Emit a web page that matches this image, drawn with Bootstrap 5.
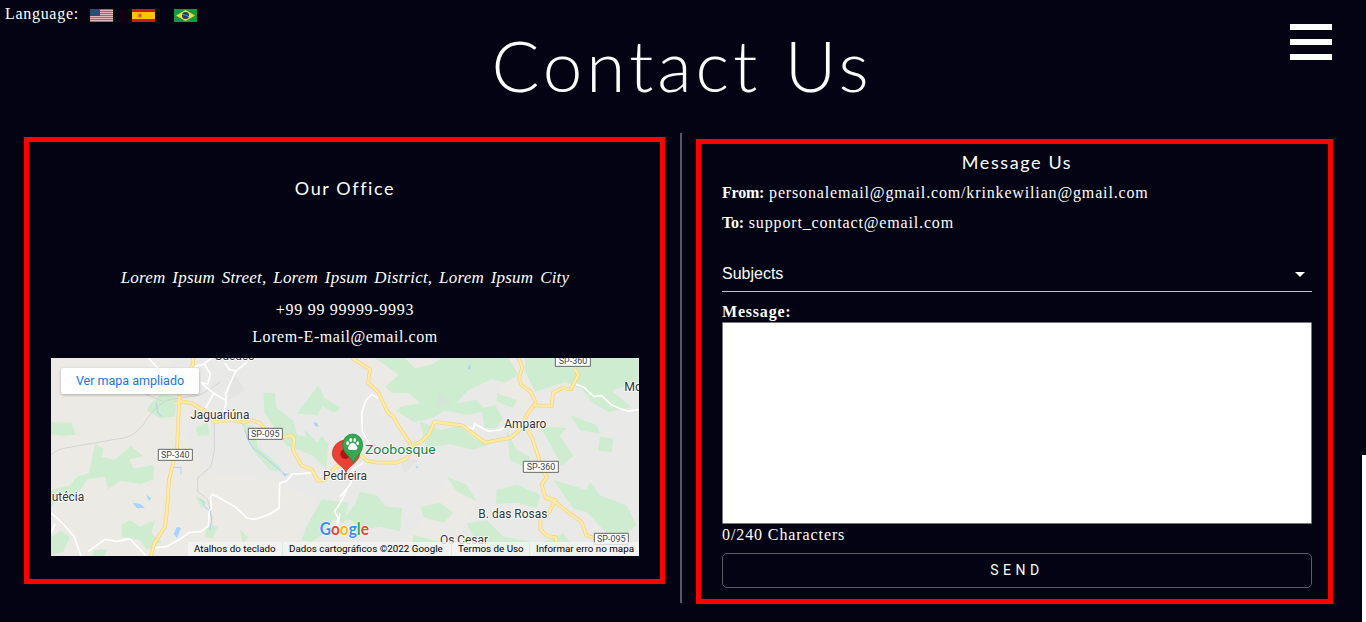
<!DOCTYPE html>
<html lang="en">
<head>
<meta charset="utf-8">
<meta name="viewport" content="width=device-width, initial-scale=1">
<title>Contact Us</title>
<link href="https://cdn.jsdelivr.net/npm/bootstrap@5.3.0/dist/css/bootstrap.min.css" rel="stylesheet">
<style>
html,body{height:100%;overflow:hidden}
body{background:#040314;color:#fbfffb;font-family:"Liberation Serif",serif;font-size:16px;letter-spacing:.8px}
.page-top{height:133px}
.lang-bar{height:27px;padding-left:5px}
.lang-text{width:85px;white-space:nowrap;letter-spacing:.7px}
.page-title{font:300 71px/76px Lato,sans-serif;letter-spacing:4px;margin:0 0 0 -2px}
.menu-btn{position:absolute;right:34px;top:24px;width:42px;border:0;padding:0;background:none}
.menu-btn span{display:block;height:6px;background:#fbfffb}
.panels{padding:0 33px 0 24px}
.frame{border:5px solid red}
.office{width:641px;height:447px;margin-top:4px;padding:0 21px 0 22px}
.divider{width:2px;height:470px;margin:0 14px 0 15px;background:#5a5963}
.message{width:637px;height:465px;margin-top:6px;padding:0 16px 0 21px}
.panel-title{font:400 18px/24px Lato,sans-serif;letter-spacing:1.6px;margin:0}
.office .panel-title{margin-top:34px}
.address{font-style:italic;font-size:17px;line-height:24px;letter-spacing:.2px;word-spacing:2.4px;margin:66px 0 0;white-space:nowrap}
.line{line-height:24px;white-space:nowrap;margin:0}
.line b{letter-spacing:-.2px}
.line .mail{letter-spacing:.85px}
.map-box{position:relative;width:588px;height:198px;letter-spacing:0;overflow:hidden}
.map-box svg{display:block}
.map-link{position:absolute;left:10px;top:10px;width:138px;height:26px;border-radius:2px;background:#fff;color:#1a73e8;font:12.5px/26px Roboto,sans-serif;text-align:center;text-decoration:none;box-shadow:0 1px 3px #0004}
.map-legal{position:absolute;right:0;bottom:0;height:14px;background:#f5f5f5cc;color:#000;font:9.8px/14px Roboto,sans-serif;white-space:nowrap}
.map-legal span{padding:0 6px}
.map-legal span+span{border-left:1px solid #ddeadf}
.subject{height:37px;border:0;border-bottom:1px solid #c4c3cb;background:none;color:#fbfffb;font:300 16px/36px "Liberation Sans",sans-serif;padding:2px 7px 0 0;letter-spacing:0}
.caret{border:5px solid transparent;border-top-color:#fbfffb;border-bottom:0;margin-top:1px}
.msg-area{display:block;height:202px;width:590px;border:1px solid #767676;background:#fff;border-radius:1px;resize:none;padding:2px}
.send{height:35px;border:1px solid #5d5c66;border-radius:5px;color:#fbfffb;font:14px/33px Roboto,sans-serif;letter-spacing:4.5px;padding:0}
.scroll-thumb{position:fixed;right:0;top:455px;bottom:0;width:4px;background:#fbfffb}
</style>
</head>
<body>
<header class="page-top">
  <div class="lang-bar d-flex align-items-center">
    <span class="lang-text">Language:</span>
    <div class="d-flex" style="gap:19px;margin-top:4px">
      <svg width="23" height="13" viewBox="0 0 23 13"><path fill="#e6b6bd" d="M0 0h23v13H0z"/><path stroke="#cf5260" d="M0 .5h23M0 2.5h23M0 4.5h23M0 6.5h23M0 8.5h23M0 10.5h23M0 12.5h23"/><path fill="#284e70" d="M0 0h10v7H0z"/></svg>
      <svg width="23" height="13" viewBox="0 0 23 13"><path fill="#c91b1f" d="M0 0h23v13H0z"/><path fill="#ffc400" d="M0 3h23v7H0z"/><path fill="#d98b2c" d="M5.500 4.500h4.500v4L8 9 5.500 8z"/><path fill="#b8602a" d="M7 5.500h2v2H7z"/></svg>
      <svg width="23" height="13" viewBox="0 0 23 13"><path fill="#129a3c" d="M0 0h23v13H0z"/><path fill="#f1df1b" d="M2 6.5 11.5 1 21 6.5 11.5 12z"/><circle cx="11.5" cy="6.5" r="3.5" fill="#183b76"/><path stroke="#9fb6c7" stroke-width=".7" fill="none" d="M8 5.5q4 0 7 2.3"/></svg>
    </div>
  </div>
  <h1 class="page-title text-center">Contact Us</h1>
  <button class="menu-btn d-flex flex-column" style="gap:9px" aria-label="Menu"><span class="w-100"></span><span class="w-100"></span><span class="w-100"></span></button>
</header>
<main class="panels d-flex align-items-start">
  <section class="frame office text-center flex-shrink-0">
    <h2 class="panel-title">Our Office</h2>
    <p class="address">Lorem Ipsum Street, Lorem Ipsum District, Lorem Ipsum City</p>
    <p class="line" style="margin-top:8px;letter-spacing:.7px">+99 99 99999-9993</p>
    <p class="line" style="margin:3px 0 9px;letter-spacing:.55px">Lorem-E-mail@email.com</p>
    <div class="map-box">
      <svg width="588" height="198" viewBox="18 24 1764 594" font-family="Roboto,sans-serif">
        <defs>
          <path id="roads-west" d="M444 24v20l-38 60-4 56-6 140-12 40-12 50-6 90-6 50-32 50-10 38M390 160l20-6 30 6 38 22 30 34 50-6 40 8 20-8 28 10 26 34 30 10 36-8 10 10-4 36 26 44 30 12 18 34 20-2 34-40 14-4"/>
          <path id="roads-east" d="M921 24l54 34-6 40 30 28 30 62 16 12 10 20 40 60 8 20-20 26-28 12-60 0-30-6-24-20M1100 286l30-12 22-22 16-36 84 10 50 38 18 14 50-10 26-4 28-24 24-50 24-32-14-32-28-20-8-20 10-34-14-34M1470 166l50 2 4-40 28-14 26 4 12-24 10-20-10-16M1442 230l20 36 20 60 4 28 20 26-16 24 12 40 26 10 46 36 36 26 14 40 40 14M1500 440l32 10-22 40-24 14v34l20 20 26 4 6 30 60 4 14 20"/>
        </defs>
        <path fill="#e9e9e8" d="M0 0h1800v640H0z"/>
        <g fill="#eceae4">
          <path d="M0 0h330l120 110-30 150 70 110 210 20 110 60-90 180H0z"/>
          <path d="M960 24h200l60 110-110 80-100-20zM1210 390l90 60-60 100-110-60zM1400 50l90 40-40 100-90-50zM1050 600l100-110 90 128z"/>
        </g>
        <g fill="#ceeccf">
          <path d="M18 216l62 2 12 36-40 4-34-6zM345 135l50 5-5 60-45 4-40-22 12-20zM150 282l25 14-5 24 38 10 50-42 36 30-42 10 14 28 60-12v44l-38 14-62-10-38 26-8-38-52 6-24 38-60 20-30 34-20-20 30-40 52-12 20-26 36-10z"/>
          <path d="M230 525l25-15 30 20 45-20-10 40 30 25-45 25-20-30-55-10zM18 560l30-18 26 20-20 44-36 8zM655 128h34l5 44 50 40 14 44 30 5 26 60-50-20-40-14-46-70-20-30zM820 105l18 40 50 28-20 16-36-20-14 26-62-4zM780 238l36 40 14-20 20 24-6 74-54-50zM588 220l42 10 8 62 60 50 14 22-38-4-50-60zM830 448l80 12-12 60-34-14-20 40-46 30-28-6 14-40zM452 232l36-16 6 40-34 2zM450 436l36 20-16 18zM584 538l26 24-16 18zM488 520l30 10-14 34-24-4zM148 600l40-2-10 20h-36z"/>
        </g>
        <g fill="#ceeccf" transform="translate(885 0)">
          <path d="M105 24h90l30 30 50-10 30-20h200l30 50-40 24-40-10-70 32-36 40 60-10 30 34-56 10-70-12-30 20-60 14-54-32 10-14 60-10-30-30-56-2-16-20 40-34zM555 24h340v72l-80 26 60 50-70 14-50-30-30-40-50-20-90 30-30-64zM425 175l40-10 24 40-20 30-36-2zM240 215l60 24 60-10 50 40 50 10-60 20-70-16-70 10zM500 240l30 60 40 20-10 34-50-24zM600 230l80 4-20 24 40 60-36 30-30-60zM690 195l80 30 10 26-60-10zM470 420l60-16 70 30-10 40-60-16-62 4zM640 390l100 30 10-24 30 40 80 30 30 60-40 34-50-10-60-64-40-10zM60 425l50 10 26 34 50 5-6 70-60-14-56 10-30-30-30 4 40-50zM240 470l60-12 40 30-30 30-58-16zM320 380l60 24 30 50-60-30zM220 555l80 20 20 40H210zM380 520l60-10 50 50 110 20 70-30 50 66H430zM780 260l40 6-6 40-40-4zM470 130l60 20-10 24-50-20z"/>
        </g>
        <path fill="#dcdcdc" opacity=".4" d="M560 60l40 60-50 30zM1180 120l40 44-50 10zM1060 320l60 10-40 40z"/>
        <g fill="#a6d3ff">
          <path d="M262 458l24 4 14 12-24 1zM304 434l14 10-6 10zM396 530l12 4-12 30-10-12zM806 216l12 4 2 10-10-2zM708 362l14 10 12-2-16 10zM330 155l6 8 0 12zM1110 346l10 4-2 8zM1274 42l4 10-4 8-6-6zM1348 585l12 5-12 8z"/>
          <path fill="none" stroke="#a6d3ff" stroke-width="3" d="M388 352h20v22M464 448q12 2 14 22 22 10 22 44l-6 26M600 240q10 50 40 66l70 58M336 170q0 20 14 30"/>
        </g>
        <path fill="none" stroke="#c9c9cc" stroke-width="2" d="M18 314q20-18 50-21l160-28q36-2 66-40 30-50 70-74l100-16q40-20 62-40M300 132l50 20M508 220v80l-10 50-40 34v40l30 24 14 60"/>
        <g fill="none" stroke="#fff" stroke-width="5" stroke-linejoin="round">
          <path d="M310 24l30 32M448 50l30-8 18 30-8 30-20-4M478 40l24-16M470 100l36 30 34 20M506 130l-24 44M606 36l-34 28-30 66 2 20-6 34M540 40l12 18 24 6M18 488l36 34 34 38 20 58M18 550l12-30M130 604l50-36 36 6 38-8 50 52M330 594l34-4 40-22 28-20 36-4 22-16 2-44 8-10-4-32 6-10 68 38 36 34 24 4 46-16 26-18 2-74 22-8 16-20 32-1 30-4M905 420l-20 40-16 24 10 20-4 30M1000 146l-20-14-18 20-6 18-6 20 2 54 12 22 10 16"/>
          <path transform="translate(885 0)" d="M378 232l22 4 4-14 42 22 34-4 20-14M706 102l26 10 30 28 22-4 32 30 30 12 16 6 38-6M70 338l-30 20-8 44-32 38M0 490l-6 30"/>
        </g>
        <g fill="none" stroke="#f3d27c" stroke-width="11" stroke-linejoin="round"><use href="#roads-west"/><use href="#roads-east"/></g>
        <g fill="none" stroke="#ffeba6" stroke-width="7" stroke-linejoin="round"><use href="#roads-west"/><use href="#roads-east"/></g>
        <path fill="#fff" stroke="#666" stroke-width="3" d="M340 298h102v33H340zM610 235h102v33H610zM1531 16h105v33H1531zM1435 334h105v33H1435zM1648 550h102v33H1648z"/>
        <g font-size="27" fill="#454545" text-anchor="middle">
          <text x="391" y="324" textLength="86" lengthAdjust="spacingAndGlyphs">SP-340</text><text x="661" y="261" textLength="86" lengthAdjust="spacingAndGlyphs">SP-095</text><text x="1584" y="42" textLength="86" lengthAdjust="spacingAndGlyphs">SP-360</text><text x="1488" y="360" textLength="86" lengthAdjust="spacingAndGlyphs">SP-360</text><text x="1699" y="576" textLength="86" lengthAdjust="spacingAndGlyphs">SP-095</text>
        </g>
        <g font-size="37" fill="#333" stroke="#fff" stroke-width="5" paint-order="stroke" stroke-linejoin="round">
          <text x="508" y="31" textLength="120" lengthAdjust="spacingAndGlyphs">Guedes</text><text x="436" y="207" textLength="177" lengthAdjust="spacingAndGlyphs">Jaguariúna</text><text x="20" y="453" textLength="98" lengthAdjust="spacingAndGlyphs">utécia</text><text x="834" y="390" textLength="132" lengthAdjust="spacingAndGlyphs">Pedreira</text><text x="1378" y="234" textLength="126" lengthAdjust="spacingAndGlyphs">Amparo</text><text x="1300" y="504" textLength="207" lengthAdjust="spacingAndGlyphs">B. das Rosas</text><text x="1185" y="581" textLength="144" lengthAdjust="spacingAndGlyphs">Os Cesar</text><text x="1738" y="123">Mo</text>
          <text x="960" y="312" font-size="41" fill="#188045" textLength="212" lengthAdjust="spacingAndGlyphs">Zoobosque</text>
        </g>
        <path fill="#ea4335" stroke="#c5221f" stroke-width="2" d="M903 368c-5-20-41-30-41-58a41 40 0 0 1 82 0c0 28-36 38-41 58z"/>
        <circle cx="901" cy="312" r="15" fill="#b31412"/>
        <path fill="#34a853" stroke="#188038" stroke-width="2" d="M925 340c-4-18-32-28-32-56a30 32 0 0 1 60 0c0 28-24 38-28 56z"/>
        <g fill="#fff"><ellipse cx="908" cy="280" rx="4" ry="6"/><ellipse cx="917" cy="270" rx="4" ry="6"/><ellipse cx="929" cy="270" rx="4" ry="6"/><ellipse cx="938" cy="280" rx="4" ry="6"/><path d="M923 278c8 0 10 8 14 14 2 8-6 9-14 7-8 2-16 1-14-7 4-6 6-14 14-14z"/></g>
        <text x="824" y="556" font-family="Lato,sans-serif" font-weight="700" font-size="49" stroke="#fff" stroke-width="3" paint-order="stroke" textLength="148" lengthAdjust="spacingAndGlyphs"><tspan fill="#4285f4">G</tspan><tspan fill="#ea4335">o</tspan><tspan fill="#fbbc04">o</tspan><tspan fill="#4285f4">g</tspan><tspan fill="#34a853">l</tspan><tspan fill="#ea4335">e</tspan></text>
      </svg>
      <a class="map-link" href="#">Ver mapa ampliado</a>
      <div class="map-legal d-flex text-start"><span style="width:94px">Atalhos do teclado</span><span style="width:169px">Dados cartográficos ©2022 Google</span><span style="width:78px">Termos de Uso</span><span style="width:110px">Informar erro no mapa</span></div>
    </div>
  </section>
  <div class="divider flex-shrink-0"></div>
  <section class="frame message flex-shrink-0">
    <h2 class="panel-title text-center" style="margin-top:6px">Message Us</h2>
    <p class="line" style="margin-top:7px"><b>From:</b> <span class="mail">personalemail@gmail.com/krinkewilian@gmail.com</span></p>
    <p class="line" style="margin-top:6px"><b>To:</b> <span class="mail">support_contact@email.com</span></p>
    <div class="subject d-flex align-items-center justify-content-between" style="margin-top:20px"><span>Subjects</span><span class="caret"></span></div>
    <label class="line d-block fw-bold" for="msg" style="margin-top:8px;height:22px">Message:</label>
    <textarea class="msg-area" id="msg"></textarea>
    <p class="line" style="height:23px;line-height:21px;margin-bottom:6px;letter-spacing:.9px">0/240 Characters</p>
    <button class="btn send w-100 d-block">SEND</button>
  </section>
</main>
<div class="scroll-thumb"></div>
<script src="https://cdn.jsdelivr.net/npm/bootstrap@5.3.0/dist/js/bootstrap.bundle.min.js"></script>
</body>
</html>
